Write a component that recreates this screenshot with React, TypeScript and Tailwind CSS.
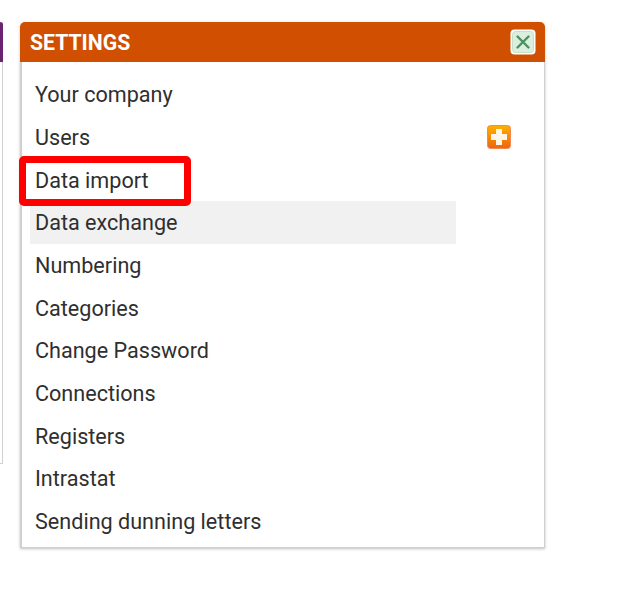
const items = [
  'Your company',
  'Users',
  'Data import',
  'Data exchange',
  'Numbering',
  'Categories',
  'Change Password',
  'Connections',
  'Registers',
  'Intrastat',
  'Sending dunning letters',
];

function CloseIcon() {
  return (
    <svg width="26" height="26" viewBox="0 0 26 26" aria-hidden="true">
      <rect x="0.5" y="0.5" width="25" height="25" rx="4" fill="#ffffff" />
      <rect x="2.5" y="2.5" width="21" height="21" rx="3" fill="#dcefdf" stroke="#c3e0c8" />
      <path d="M7.5 7.5 L18.5 18.5 M18.5 7.5 L7.5 18.5" stroke="#4a9162" strokeWidth="2.4" strokeLinecap="round" />
    </svg>
  );
}

function PlusIcon() {
  return (
    <svg width="24" height="24" viewBox="0 0 24 24" aria-hidden="true">
      <defs>
        <linearGradient id="plusFill" x1="0" y1="0" x2="0" y2="1">
          <stop offset="0" stopColor="#ffb000" />
          <stop offset="1" stopColor="#ee6410" />
        </linearGradient>
      </defs>
      <rect x="0.5" y="0.5" width="23" height="23" rx="3" fill="url(#plusFill)" stroke="#f38a55" />
      <path d="M9 4 H15 V9 H20 V15 H15 V20 H9 V15 H4 V9 H9 Z" fill="#fff6e8" />
    </svg>
  );
}

export default function App() {
  return (
    <div className="relative flex h-[595px] w-[629px] items-start overflow-hidden bg-white pt-[22px] font-['Roboto',sans-serif]">
      <div className="h-[442px] w-[3px] border-r border-b border-[#d0d0d0]">
        <div className="h-[40px] w-[3px] rounded-tr-[3px] bg-[#6b2272]" />
      </div>
      <div className="ml-[17px] w-[525px] rounded-t-[5px] shadow-[0_1px_3px_rgba(0,0,0,0.25)]">
        <div className="flex h-[40px] items-center justify-between rounded-t-[5px] bg-[#d14f00] pr-[9px] pl-[10px]">
          <span className="pt-[2px] text-[21.2px] font-bold text-white">SETTINGS</span>
          <CloseIcon />
        </div>
        <ul className="h-[486px] border-r border-b border-l-2 border-[#cfcfcf] bg-white pt-[11px] pl-[8px]">
          {items.map((item) => (
            <li key={item} className="flex h-[42.7px] items-center">
              <span
                className={
                  item === 'Data exchange'
                    ? 'flex h-full w-[426px] items-center bg-[#f1f1f1] pt-[2px] pl-[5px] text-[21.6px] text-[#2f2f2f]'
                    : 'flex h-full w-[426px] items-center pt-[2px] pl-[5px] text-[21.6px] text-[#2f2f2f]'
                }
              >
                {item}
              </span>
              {item === 'Users' && (
                <span className="ml-[31px] flex">
                  <PlusIcon />
                </span>
              )}
            </li>
          ))}
        </ul>
      </div>
      <div className="absolute top-[156px] left-[19px] h-[50px] w-[172px] rounded-[5px] border-[7px] border-[#ff0000]" />
    </div>
  );
}
